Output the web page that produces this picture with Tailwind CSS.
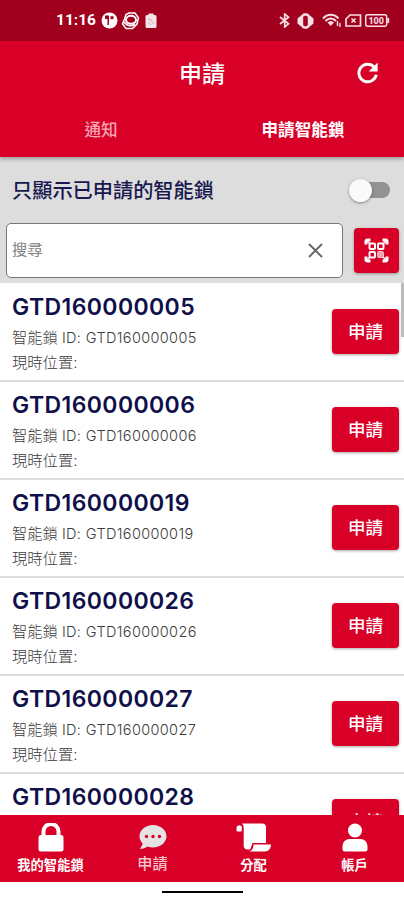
<!DOCTYPE html>
<html lang="zh-Hant">
<head>
    <meta charset="UTF-8">
    <meta name="viewport" content="width=device-width, initial-scale=1.0">
    <title>申請智能鎖</title>
    <script src="https://cdn.jsdelivr.net/npm/@tailwindcss/browser@4"></script>
    <style>
        body {
            font-family: Inter, 'Noto Sans CJK TC', sans-serif;
        }
    </style>
</head>
<body class="bg-white">
    <div class="w-[404px] h-[900px] flex flex-col overflow-hidden">
        <!-- Status bar -->
        <div class="h-[41px] shrink-0 bg-[#a0001d] text-white flex items-center justify-between pl-[56px] pr-[14px]">
            <div class="flex items-center h-full">
                <span class="w-[40px] text-[15.500px] leading-none font-bold font-['Roboto'] whitespace-nowrap">11:16</span>
                <svg class="ml-[5px] w-[17px] h-[17px]" viewBox="0 0 17 17">
                    <circle cx="8.5" cy="8.5" r="8" fill="#fff"/>
                    <path d="M4 3.500h4V13H6.500V7H4z" fill="#a0001d"/>
                    <path d="M9.500 4.200h3v3h-3z" fill="#a0001d"/>
                </svg>
                <svg class="ml-[3px] w-[19px] h-[18px]" viewBox="0 0 19 18" fill="none" stroke="#fff">
                    <path d="M5 2.500 8 1h6l3.500 5-1.500 6-4.500 4.500H5L1.500 12 3.500 7z" stroke-width="1.500"/>
                    <ellipse cx="10" cy="7.800" rx="5" ry="4" stroke-width="2"/>
                    <path d="M3 10c3 4 7 4.500 11 2.500" stroke-width="1.500"/>
                </svg>
                <svg class="ml-[5px] w-[12px] h-[16px]" viewBox="0 0 12 16">
                    <path d="M3.500 2V.5h5V2H10a1.500 1.500 0 0 1 1.500 1.500v10A1.500 1.500 0 0 1 10 15H2a1.500 1.500 0 0 1-1.500-1.500v-10A1.500 1.500 0 0 1 2 2z" fill="#f3e6e8"/>
                    <path d="M3 6h2l4 5M3 9l3 3" fill="none" stroke="#d0a0aa"/>
                </svg>
            </div>
            <div class="flex items-center h-full">
                <svg class="w-[12px] h-[15px]" viewBox="0 0 12 15" fill="none" stroke="#f6dfe3" stroke-width="1.700">
                    <path d="M1 4l8.500 6.800L5.700 14V1l3.800 3.200L1 11"/>
                </svg>
                <svg class="ml-[6px] w-[17px] h-[16px]" viewBox="0 0 17 16">
                    <path d="M4 2.500v11L.5 10.500v-5zM13 2.500v11l3.500-3v-5z" fill="#f6dfe3"/>
                    <rect x="5" y="1.500" width="7" height="13" rx="3" fill="#a0001d" stroke="#f6dfe3" stroke-width="2.400"/>
                </svg>
                <svg class="ml-[8px] w-[19px] h-[15px]" viewBox="0 0 19 15" fill="none" stroke="#f6dfe3" stroke-width="2">
                    <path d="M1 5.500c4.500-5 11-5 15.500 0M3.500 8c3-3.500 7.500-3.500 10.500 0"/>
                    <path d="M5.500 9.500c2-2 4.500-2 6.500 0L8.700 13z" fill="#f6dfe3" stroke="none"/>
                    <path d="M15.500 8v5M18 10v4" stroke-width="1.400"/>
                </svg>
                <svg class="ml-[4px] w-[17px] h-[13px]" viewBox="0 0 17 13" fill="none" stroke="#f6dfe3" stroke-width="1.700">
                    <path d="M5 1h10.500v11H1V5z"/>
                    <path d="M6.500 4.500l4 4M10.500 4.500l-4 4"/>
                </svg>
                <svg class="ml-[3px] w-[25px] h-[13px]" viewBox="0 0 25 13">
                    <rect x=".7" y=".7" width="21" height="11.600" rx="2" fill="none" stroke="#f6dfe3" stroke-width="1.500"/>
                    <path d="M23.200 4v5" stroke="#f6dfe3" stroke-width="2"/>
                    <text x="11.200" y="9.700" text-anchor="middle" font-size="9" font-weight="800" font-family="Roboto, sans-serif" fill="#f6dfe3">100</text>
                </svg>
            </div>
        </div>

        <!-- Header with tabs -->
        <header class="relative z-10 h-[116px] shrink-0 bg-[#d80027] text-white shadow-[0_2px_4px_rgba(0,0,0,0.3)]">
            <div class="h-[66px] grid grid-cols-3 items-center">
                <h1 class="col-start-2 text-center text-[23px] leading-none font-medium">申請</h1>
                <button class="justify-self-end mr-[23px] mt-[-3px]">
                    <svg class="w-[27px] h-[27px]" viewBox="0 0 24 24">
                        <path d="M18 7.300A7.800 7.800 0 1 0 19.800 14" fill="none" stroke="#fff" stroke-width="2.600"/>
                        <path d="M21 3v8h-8z" fill="#fff"/>
                    </svg>
                </button>
            </div>
            <div class="h-[50px] grid grid-cols-2 text-center text-[16.600px] leading-[47px]">
                <span class="text-[#f3a6b2] font-medium">通知</span>
                <span class="font-bold">申請智能鎖</span>
            </div>
        </header>

        <!-- Filter and search -->
        <section class="h-[126px] shrink-0 bg-[#dddddd]">
            <div class="h-[66px] pl-[12px] pr-[14px] flex items-center justify-between">
                <span class="mt-[3px] text-[20.200px] leading-none font-medium text-[#191950]">只顯示已申請的智能鎖</span>
                <div class="w-[41px] h-[24px] flex items-center">
                    <span class="w-[23px] h-[23px] shrink-0 rounded-full bg-[#fafafa] shadow-[0_1px_3px_rgba(0,0,0,0.4)] z-10"></span>
                    <span class="-ml-[12px] w-[30px] h-[16px] rounded-full bg-[#929292]"></span>
                </div>
            </div>
            <div class="pl-[6px] pr-[5px] flex items-center justify-between">
                <div class="w-[337px] h-[55px] rounded-[5px] border border-[#777777] bg-white pl-[5px] pr-[19px] flex items-center justify-between">
                    <span class="text-[15.300px] text-[#808080]">搜尋</span>
                    <svg class="w-[15px] h-[15px]" viewBox="0 0 15 15" stroke="#666" stroke-width="1.900">
                        <path d="M1 1l13 13M14 1L1 14"/>
                    </svg>
                </div>
                <button class="w-[45px] h-[45px] rounded-[4px] bg-[#d80027] flex items-center justify-center shadow-[0_1px_3px_rgba(0,0,0,0.35)]">
                    <svg class="w-[25px] h-[25px]" viewBox="0 0 25 25" fill="none" stroke="#fff" stroke-width="2">
                        <rect x="5.500" y="5.500" width="5.500" height="5.500" rx="1"/>
                        <rect x="14" y="5.500" width="5.500" height="5.500" rx="1"/>
                        <rect x="5.500" y="14" width="5.500" height="5.500" rx="1"/>
                        <rect x="13.500" y="13.500" width="6" height="6" rx="1" fill="#f2a3b0" stroke="#f6b8c2" stroke-width="1"/>
                        <path d="M6 6L2.500 2.500M19 6l3.500-3.500M6 19l-3.500 3.500M19 19l3.500 3.500" stroke-width="1.500"/>
                        <path d="M2 6.500V3.500A1.500 1.500 0 0 1 3.500 2h3M18.500 2h3A1.500 1.500 0 0 1 23 3.500v3M2 18.500v3A1.500 1.500 0 0 0 3.500 23h3M18.500 23h3a1.500 1.500 0 0 0 1.500-1.500v-3" stroke-width="3"/>
                    </svg>
                </button>
            </div>
        </section>

        <!-- Lock list -->
        <main class="relative flex-1 min-h-0 overflow-hidden bg-white">
            <ul id="lock-list" class="pt-px"></ul>
            <div class="absolute right-0 top-0 w-[3px] h-[54px] bg-[#bcbcbc]"></div>
        </main>

        <!-- Bottom navigation -->
        <nav class="h-[67px] shrink-0 bg-[#d80027] text-white grid grid-cols-4 text-[13.300px] leading-none font-bold">
            <div class="flex flex-col items-center pt-[8px]">
                <svg class="w-[26px] h-[29px]" viewBox="0 0 26 29">
                    <path d="M5.500 13V8.500a7.500 7.500 0 0 1 15 0V13" fill="none" stroke="#fff" stroke-width="4"/>
                    <rect x=".5" y="12" width="25" height="16.500" rx="2.500" fill="#fff"/>
                </svg>
                <span class="mt-[7px] whitespace-nowrap">我的智能鎖</span>
            </div>
            <div class="flex flex-col items-center pt-[9px] pl-[2px] text-[#f3c5cc]">
                <svg class="w-[28px] h-[27px]" viewBox="0 0 28 27">
                    <path d="M14 1C6.500 1 .5 6 .5 12.200c0 2.800 1.200 5.300 3.200 7.300-.5 2-1.500 3.800-2.900 5.300 2.900.2 5.500-.8 7.500-2.400 1.700.6 3.600 1 5.700 1 7.500 0 13.500-5 13.500-11.200S21.500 1 14 1z" fill="#e6e3e4"/>
                    <g fill="#d80027">
                        <circle cx="7.500" cy="12.500" r="1.700"/>
                        <circle cx="14" cy="12.500" r="1.700"/>
                        <circle cx="20.500" cy="12.500" r="1.700"/>
                    </g>
                </svg>
                <span class="mt-[5px] text-[15.200px] font-medium">申請</span>
            </div>
            <div class="flex flex-col items-center pt-[8px] pl-[2px]">
                <svg class="w-[36px] h-[29px]" viewBox="0 0 36 29" fill="#fff">
                    <path d="M5.500 8.500h-4A1 1 0 0 1 .5 7.500V4a3 3 0 0 1 5.500 0z"/>
                    <path d="M6 .5h20a4 4 0 0 1 4 4V20H16.500l-2.300 6.500h-2.500a4 4 0 0 1-4-4V5.500A6 6 0 0 0 6 .5z"/>
                    <path d="M17.500 21.500H35c0 4-2.500 7-6 7H13.500c2.500-1 4-3 4-7z"/>
                </svg>
                <span class="mt-[7px]">分配</span>
            </div>
            <div class="flex flex-col items-center pt-[8px] pl-[2px]">
                <svg class="w-[26px] h-[29px]" viewBox="0 0 26 29" fill="#fff">
                    <circle cx="13" cy="7.500" r="7"/>
                    <path d="M7.500 16h11a7 7 0 0 1 7 7v3a2.500 2.500 0 0 1-2.500 2.500H3A2.500 2.500 0 0 1 .5 26v-3a7 7 0 0 1 7-7z"/>
                </svg>
                <span class="mt-[7px]">帳戶</span>
            </div>
        </nav>
        <div class="h-[18px] shrink-0 bg-white flex justify-center pt-[9px]">
            <div class="w-[81px] h-[2px] bg-black"></div>
        </div>
    </div>

    <script>
        const locks = ['GTD160000005', 'GTD160000006', 'GTD160000019', 'GTD160000026', 'GTD160000027', 'GTD160000028'];
        const list = document.getElementById('lock-list');

        locks.forEach((id) => {
            const item = document.createElement('li');
            item.className = 'h-[98px] flex justify-between pl-[12px] pr-[5px] border-b-2 border-[#dddddd]';
            item.innerHTML = `
                <div class="pt-[8px] text-[15.300px] leading-[24.500px] font-light text-[#3c3c3c] whitespace-nowrap">
                    <h2 class="h-[34px] text-[23px] leading-[30px] tracking-[0.4px] font-semibold text-[#0f0f4a]">${id}</h2>
                    <p>智能鎖<span class="ml-[4px] text-[14.500px] tracking-[0.35px]">ID: ${id}</span></p>
                    <p>現時位置:</p>
                </div>
                <button class="mt-[25px] w-[67px] h-[45px] rounded-[4px] bg-[#d80027] text-white text-[17.500px] leading-none font-medium shadow-[0_1px_3px_rgba(0,0,0,0.35)]">申請</button>
            `;
            list.appendChild(item);
        });
    </script>
</body>
</html>
